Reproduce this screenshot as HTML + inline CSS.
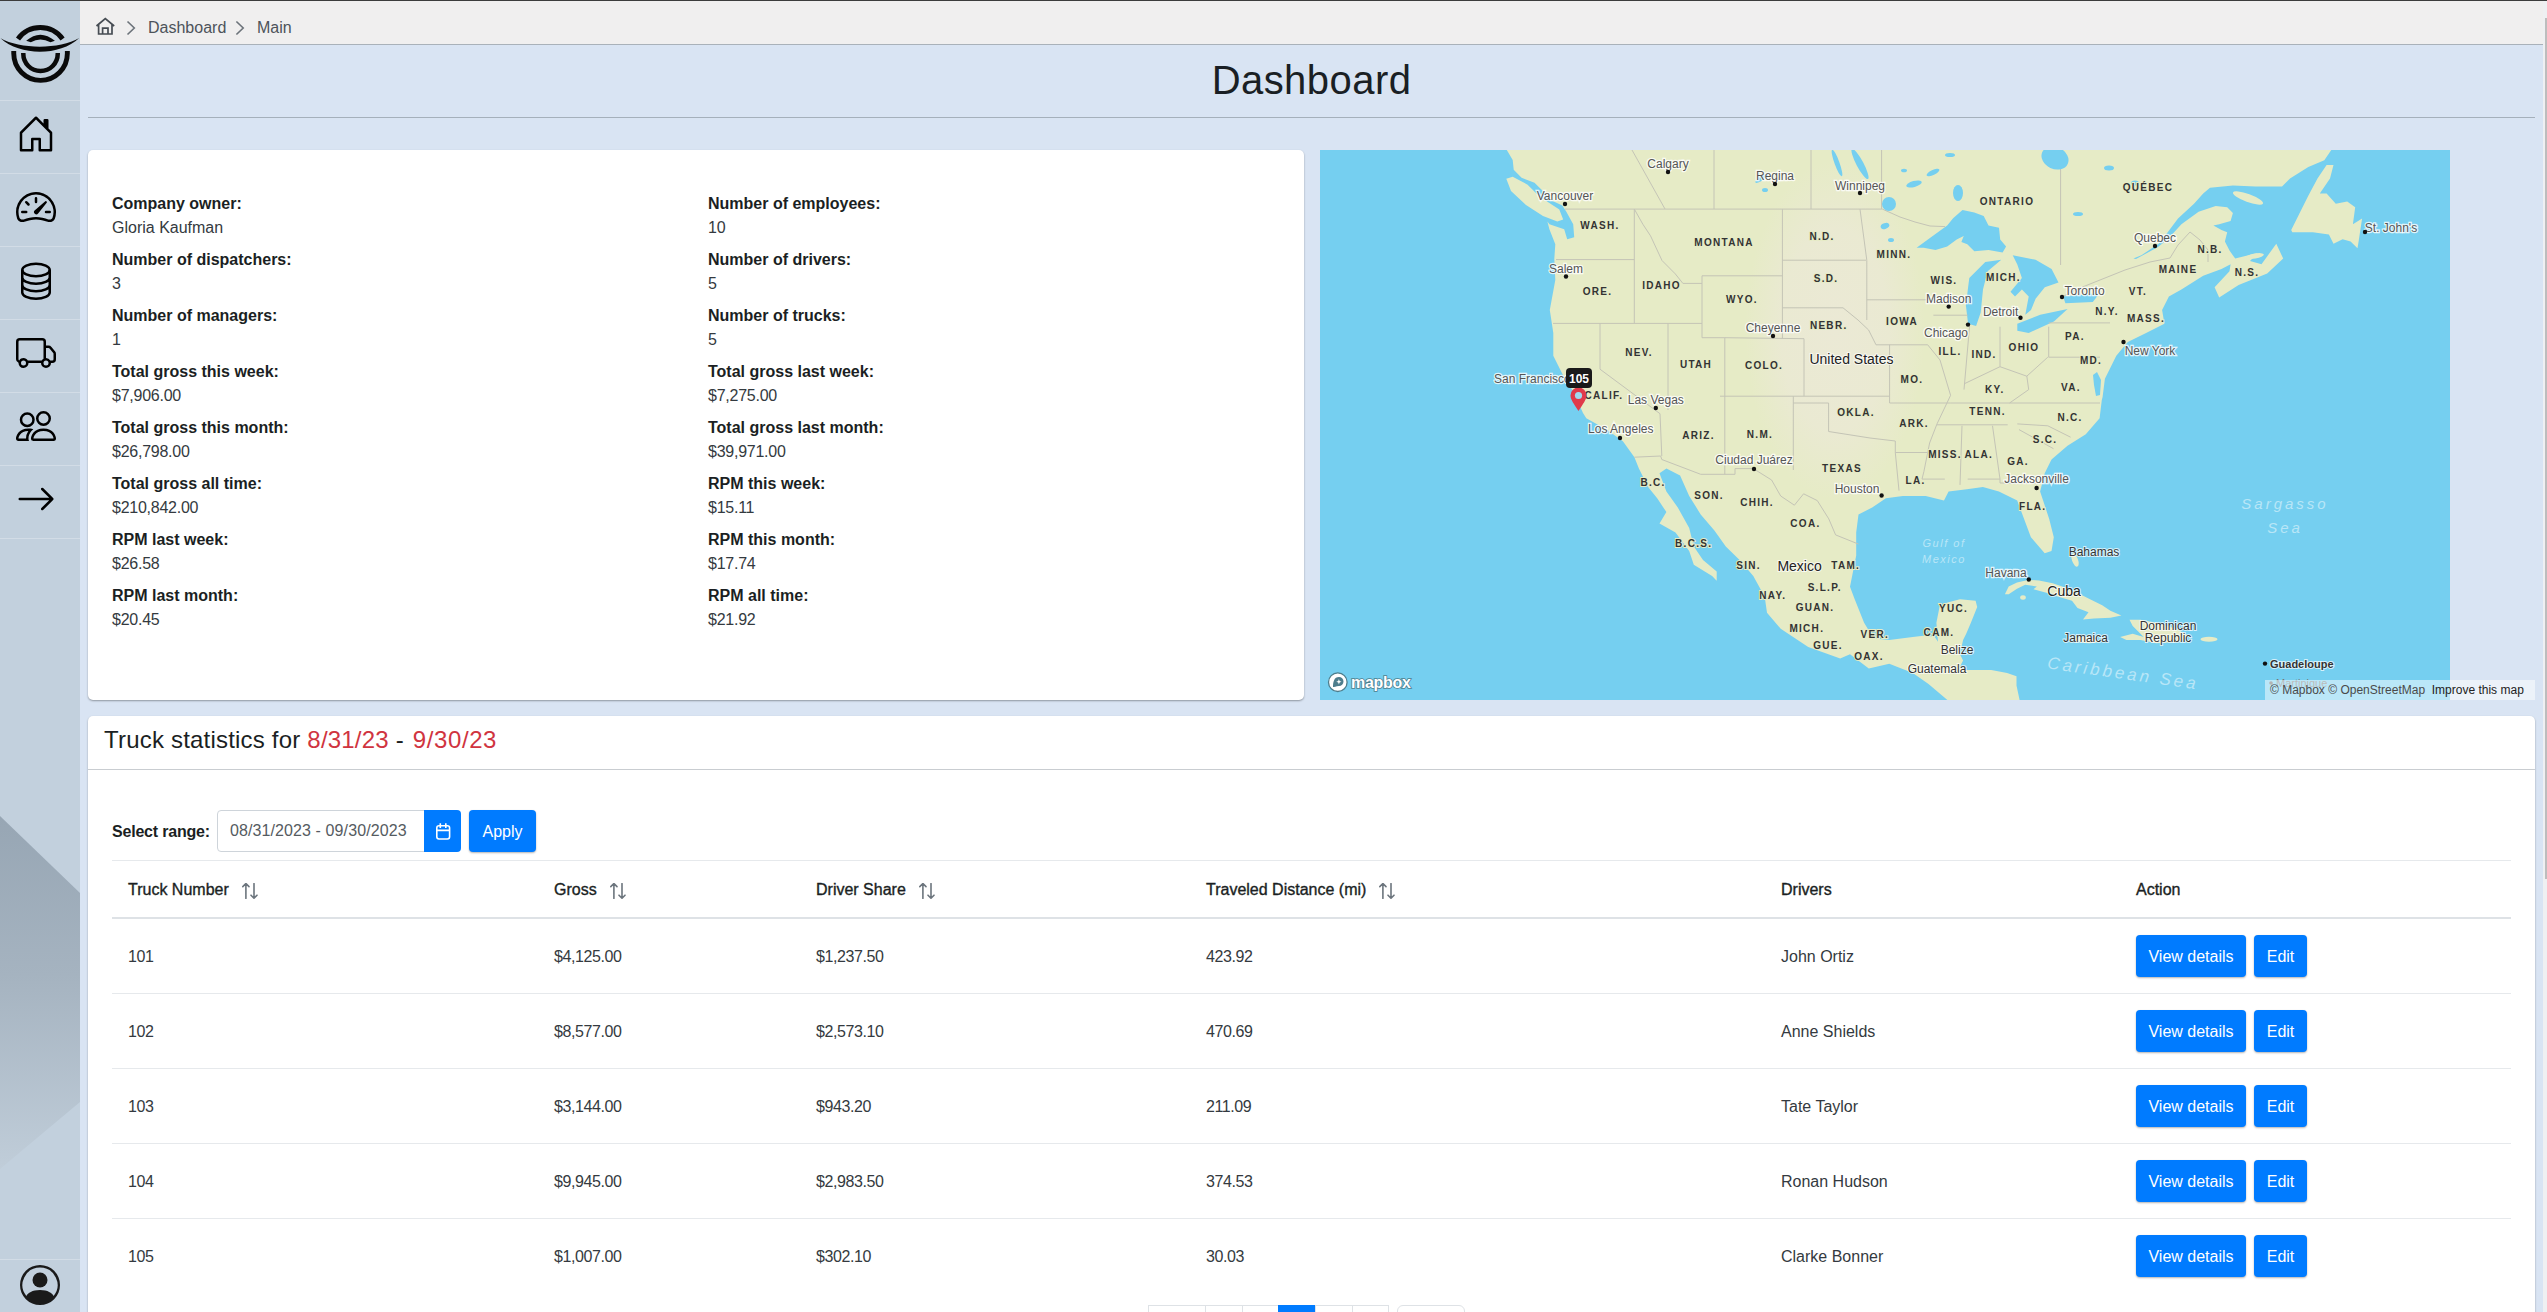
<!DOCTYPE html>
<html><head><meta charset="utf-8">
<style>
*{box-sizing:border-box;margin:0;padding:0}
html,body{width:2547px;height:1312px;overflow:hidden}
body{font-family:"Liberation Sans",sans-serif;background:#d9e4f3;color:#212529;position:relative;font-size:16px}
.abs{position:absolute}
#topline{left:0;top:0;width:2547px;height:1px;background:#3c3c3c}
#sidebar{left:0;top:1px;width:80px;height:1311px;background:#c2d0dd;overflow:hidden}
.sep{position:absolute;left:0;width:80px;height:1px;background:#d2dce6}
.ico{position:absolute}
#crumb{left:80px;top:1px;width:2463px;height:44px;background:#f0efef;border-bottom:1px solid #a9b1b9}
#scroll{left:2543px;top:1px;width:4px;height:1311px;background:#eff0f2}
#thumb{left:2545px;top:18px;width:2px;height:861px;background:#bdbdbd}
.crumbtxt{font-size:16px;color:#4d535a;position:absolute;top:17px;line-height:20px}
h1{position:absolute;left:80px;width:2463px;top:56px;text-align:center;font-size:40px;font-weight:normal;color:#1a1f24;line-height:48px;letter-spacing:0.45px}
#h1line{left:88px;top:117px;width:2447px;height:1px;background:#a5b0bb}
.card{position:absolute;background:#fff;border-radius:5px;box-shadow:0 1px 2px rgba(0,0,0,.35)}
#info{left:88px;top:150px;width:1216px;height:550px}
.icol{position:absolute;top:41.5px}
.lbl{font-weight:bold;font-size:16px;color:#1b1f23;line-height:24px;white-space:nowrap}
.val{font-size:16px;color:#343a40;line-height:24px;margin-bottom:8px;white-space:nowrap}
#map{left:1320px;top:150px;width:1130px;height:550px;background:#75cff0;overflow:hidden}
#tbl{left:88px;top:716px;width:2447px;height:620px}

.ttl{position:absolute;left:16px;top:8px;font-size:24px;line-height:32px;color:#1b1f23;white-space:nowrap;letter-spacing:0.2px}
.red{color:#d03440}
.hsep{position:absolute;left:0;top:53px;width:100%;height:1px;background:#c9cdd1}
.selr{position:absolute;left:24px;top:104px;font-weight:bold;line-height:24px;color:#1b1f23;letter-spacing:-0.2px}
.inp{position:absolute;left:129px;top:94px;width:208px;height:42px;border:1px solid #ced4da;border-radius:4px 0 0 4px;font-size:16px;color:#555b61;padding:10px 0 0 12px;line-height:20px;letter-spacing:0.1px;white-space:nowrap}
.calbtn{position:absolute;left:336px;top:94px;width:37px;height:42px;background:#007bff;border-radius:0 4px 4px 0;display:flex;align-items:center;justify-content:center}
.btn{position:absolute;height:42px;background:#007bff;color:#fff;border-radius:4px;box-shadow:0 1px 2px rgba(0,0,0,.3);text-align:center;line-height:43px;font-size:16px}
.apply{left:381px;top:94px;width:67px}
.vd{width:110px}.ed{width:53px}
.tline{position:absolute;left:24px;width:2399px;background:#e6e9ec}
.th{position:absolute;top:161.5px;line-height:24px;color:#1b1f23;white-space:nowrap;-webkit-text-stroke:0.35px #1b1f23}
.sort{position:absolute;left:calc(100% + 13px);top:5.5px}
.td{position:absolute;line-height:74px;color:#343a40;white-space:nowrap;margin-top:1px}
.num{letter-spacing:-0.4px}
.num2{letter-spacing:-0.25px}
.pg{position:absolute;top:589px;height:40px;border:1px solid #dee2e6;border-right:none;background:#fff}
.pg.act{background:#007bff;border-color:#007bff}
.pg2{position:absolute;top:589px;height:40px;border:1px solid #dee2e6;border-radius:6px;background:#fff}
#attr{left:2265px;top:680px;width:270px;height:20px;background:rgba(255,255,255,.5);font-size:12px;line-height:20px;padding-left:5px;white-space:nowrap}
</style></head><body>
<div id="topline" class="abs"></div>
<div id="sidebar" class="abs">
<svg width="80" height="100" style="position:absolute;left:0;top:-1px" viewBox="0 0 80 100">
<path d="M18,39 A27.4,27.4 0 0 1 62.6,39" stroke="#0a0a0a" stroke-width="5" fill="none"/>
<path d="M26.2,40.8 Q40.2,28.5 54.9,40.8 L50.5,42.2 Q40.2,36.6 30.8,42.2 Z" fill="#0a0a0a"/>
<path d="M0.6,38.3 C20,49.5 60,49.5 79.2,38 C60,56.3 20,56.3 0.6,38.3 Z" fill="#0a0a0a"/>
<path d="M13.75,51 L13.75,53.6 A26.8,26.8 0 0 0 67.35,53.6 L67.35,51" stroke="#0a0a0a" stroke-width="4.9" fill="none"/>
<path d="M23.3,53.1 L23.3,53.8 A17.2,17.2 0 0 0 57.75,53.8 L57.75,53.1" stroke="#0a0a0a" stroke-width="4.5" fill="none"/>
</svg>
<div class="sep" style="top:99px"></div>
<div class="sep" style="top:172px"></div>
<div class="sep" style="top:245px"></div>
<div class="sep" style="top:318px"></div>
<div class="sep" style="top:391px"></div>
<div class="sep" style="top:464px"></div>
<div class="sep" style="top:537px"></div>
<svg class="ico" style="left:16px;top:113px" width="40" height="40" viewBox="0 0 16 16" fill="#000"><path d="M8.354 1.146a.5.5 0 0 0-.708 0l-6 6A.5.5 0 0 0 1.5 7.5v7a.5.5 0 0 0 .5.5h4.5a.5.5 0 0 0 .5-.5v-4h2v4a.5.5 0 0 0 .5.5H14a.5.5 0 0 0 .5-.5v-7a.5.5 0 0 0-.146-.354L13 5.793V2.5a.5.5 0 0 0-.5-.5h-1a.5.5 0 0 0-.5.5v1.293L8.354 1.146zM2.5 14V7.707l5.5-5.5 5.5 5.5V14H10v-4a.5.5 0 0 0-.5-.5h-3a.5.5 0 0 0-.5.5v4H2.5z"/></svg>
<svg class="ico" style="left:16px;top:186px" width="40" height="40" viewBox="0 0 16 16" fill="#000"><path d="M8 4a.5.5 0 0 1 .5.5V6a.5.5 0 0 1-1 0V4.5A.5.5 0 0 1 8 4zM3.732 5.732a.5.5 0 0 1 .707 0l.915.914a.5.5 0 1 1-.708.708l-.914-.915a.5.5 0 0 1 0-.707zM2 10a.5.5 0 0 1 .5-.5h1.586a.5.5 0 0 1 0 1H2.5A.5.5 0 0 1 2 10zm9.5 0a.5.5 0 0 1 .5-.5h1.5a.5.5 0 0 1 0 1H12a.5.5 0 0 1-.5-.5zm.754-4.246a.389.389 0 0 0-.527-.02L7.547 9.31a.91.91 0 1 0 1.302 1.258l3.434-4.297a.389.389 0 0 0-.029-.518z"/><path fill-rule="evenodd" d="M0 10a8 8 0 1 1 15.547 2.661c-.442 1.253-1.845 1.602-2.932 1.25C11.309 13.488 9.475 13 8 13c-1.474 0-3.31.488-4.615.911-1.087.352-2.49.003-2.932-1.25A7.988 7.988 0 0 1 0 10zm8-7a7 7 0 0 0-6.603 9.329c.203.575.923.876 1.68.63C4.397 12.533 6.358 12 8 12s3.604.532 4.923.96c.757.245 1.477-.056 1.68-.631A7 7 0 0 0 8 3z"/></svg>
<svg class="ico" style="left:16px;top:259px" width="40" height="40" viewBox="0 0 40 40" fill="none" stroke="#000" stroke-width="2.5"><ellipse cx="20" cy="10" rx="13.75" ry="6.25"/><path d="M6.25,10 V32.5 A13.75,6.25 0 0 0 33.75,32.5 V10 M6.25,17.5 A13.75,6.25 0 0 0 33.75,17.5 M6.25,25 A13.75,6.25 0 0 0 33.75,25"/></svg>
<svg class="ico" style="left:16px;top:332px" width="40" height="40" viewBox="0 0 16 16" fill="#000"><path d="M0 3.5A1.5 1.5 0 0 1 1.5 2h9A1.5 1.5 0 0 1 12 3.5V5h1.02a1.5 1.5 0 0 1 1.17.563l1.481 1.85a1.5 1.5 0 0 1 .329.938V10.5a1.5 1.5 0 0 1-1.5 1.5H14a2 2 0 1 1-4 0H5a2 2 0 1 1-3.998-.085A1.5 1.5 0 0 1 0 10.5v-7zm1.294 7.456A1.999 1.999 0 0 1 4.732 11h5.536a2.010 2.010 0 0 1 .732-.732V3.5a.5.5 0 0 0-.5-.5h-9a.5.5 0 0 0-.5.5v7a.5.5 0 0 0 .294.456zM12 10a2 2 0 0 1 1.732 1h.768a.5.5 0 0 0 .5-.5V8.35a.5.5 0 0 0-.11-.312l-1.48-1.85A.5.5 0 0 0 13.02 6H12v4zm-9 1a1 1 0 1 0 0 2 1 1 0 0 0 0-2zm9 0a1 1 0 1 0 0 2 1 1 0 0 0 0-2z"/></svg>
<svg class="ico" style="left:16px;top:405px" width="40" height="40" viewBox="0 0 16 16" fill="#000"><path d="M15 14s1 0 1-1-1-4-5-4-5 3-5 4 1 1 1 1h8Zm-7.978-1A.261.261 0 0 1 7 12.996c.001-.264.167-1.030.760-1.720C8.312 10.629 9.282 10 11 10c1.717 0 2.687.630 3.240 1.276.593.690.758 1.457.760 1.720l-.008.002a.274.274 0 0 1-.014.002H7.022ZM11 7a2 2 0 1 0 0-4 2 2 0 0 0 0 4Zm3-2a3 3 0 1 1-6 0 3 3 0 0 1 6 0ZM6.936 9.280a5.880 5.880 0 0 0-1.230-.247A7.350 7.350 0 0 0 5 9c-4 0-5 3-5 4 0 .667.333 1 1 1h4.216A2.238 2.238 0 0 1 5 13c0-1.010.377-2.042 1.090-2.904.243-.294.526-.569.846-.816ZM4.920 10A5.493 5.493 0 0 0 4 13H1c0-.260.164-1.030.760-1.724.545-.636 1.492-1.256 3.160-1.275ZM1.500 5.500a3 3 0 1 1 6 0 3 3 0 0 1-6 0Zm3-2a2 2 0 1 0 0 4 2 2 0 0 0 0-4Z"/></svg>
<svg class="ico" style="left:16px;top:478px" width="40" height="40" viewBox="0 0 16 16" fill="#000"><path fill-rule="evenodd" d="M1 8a.5.5 0 0 1 .5-.5h11.793l-3.147-3.146a.5.5 0 0 1 .708-.708l4 4a.5.5 0 0 1 0 .708l-4 4a.5.5 0 0 1-.708-.708L13.293 8.500H1.500A.5.5 0 0 1 1 8z"/></svg>
<svg width="80" height="400" style="position:absolute;left:0;top:815px" viewBox="0 816 80 400">
<defs><linearGradient id="sg" x1="0" y1="0" x2="0" y2="1"><stop offset="0" stop-color="#97a6b4"/><stop offset="0.45" stop-color="#a5b3c0"/><stop offset="1" stop-color="#c0cdd9"/></linearGradient></defs>
<path d="M0,816 L80,893 L80,1102 L0,1169 Z" fill="url(#sg)"/>
</svg>
<div class="sep" style="top:1258px"></div>
<svg class="ico" style="left:20px;top:1264px" width="40" height="40" viewBox="0 0 16 16" fill="#1a1a1a"><path d="M11 6a3 3 0 1 1-6 0 3 3 0 0 1 6 0z"/><path fill-rule="evenodd" d="M0 8a8 8 0 1 1 16 0A8 8 0 0 1 0 8zm8-7a7 7 0 0 0-5.468 11.37C3.242 11.226 4.805 10 8 10s4.757 1.225 5.468 2.370A7 7 0 0 0 8 1z"/></svg>
</div>
<div id="crumb" class="abs">
<svg style="position:absolute;left:15px;top:16px" width="21" height="19" viewBox="95 17 21 19"><path d="M96.5,26 L105.3,18.6 L114.2,26 M98.6,24.3 V34 H112 V24.3 M102.6,34 V28.2 H108 V34" stroke="#464c53" stroke-width="1.7" fill="none"/></svg>
<svg style="position:absolute;left:46px;top:19px" width="10" height="16" viewBox="126 19 10 16"><path d="M127.5,20.5 L134.3,27 L127.5,33.5" stroke="#6c737a" stroke-width="1.6" fill="none"/></svg>
<div class="crumbtxt" style="left:68px">Dashboard</div>
<svg style="position:absolute;left:155px;top:19px" width="10" height="16" viewBox="235 19 10 16"><path d="M236.4,20.5 L243.2,27 L236.4,33.5" stroke="#6c737a" stroke-width="1.6" fill="none"/></svg>
<div class="crumbtxt" style="left:177px">Main</div>
</div>
<div id="scroll" class="abs"></div>
<div id="thumb" class="abs"></div>
<h1>Dashboard</h1>
<div id="h1line" class="abs"></div>
<div id="info" class="card">
<div class="icol" style="left:24px"><div class="lbl">Company owner:</div><div class="val">Gloria Kaufman</div><div class="lbl">Number of dispatchers:</div><div class="val num2">3</div><div class="lbl">Number of managers:</div><div class="val num2">1</div><div class="lbl">Total gross this week:</div><div class="val num2">$7,906.00</div><div class="lbl">Total gross this month:</div><div class="val num2">$26,798.00</div><div class="lbl">Total gross all time:</div><div class="val num2">$210,842.00</div><div class="lbl">RPM last week:</div><div class="val num2">$26.58</div><div class="lbl">RPM last month:</div><div class="val num2">$20.45</div></div><div class="icol" style="left:620px"><div class="lbl">Number of employees:</div><div class="val num2">10</div><div class="lbl">Number of drivers:</div><div class="val num2">5</div><div class="lbl">Number of trucks:</div><div class="val num2">5</div><div class="lbl">Total gross last week:</div><div class="val num2">$7,275.00</div><div class="lbl">Total gross last month:</div><div class="val num2">$39,971.00</div><div class="lbl">RPM this week:</div><div class="val num2">$15.11</div><div class="lbl">RPM this month:</div><div class="val num2">$17.74</div><div class="lbl">RPM all time:</div><div class="val num2">$21.92</div></div>
</div>
<div id="map" class="abs">
<svg width="1130" height="550" viewBox="1320 150 1130 550" style="position:absolute;left:0;top:0">
<rect x="1320" y="150" width="1130" height="550" fill="#75cff0"/>
<path d="M1506.8,150.0 L2331.3,150.0 L2324.3,160.3 L2308.3,167.1 L2290.0,178.6 L2282.0,186.6 L2255.7,186.6 L2232.9,185.4 L2210.0,187.7 L2203.2,193.4 L2194.0,203.7 L2178.0,218.6 L2167.7,232.3 L2158.6,243.7 L2141.4,255.2 L2133.4,258.6 L2136.0,259.0 L2158.0,247.0 L2167.7,239.2 L2181.4,224.3 L2198.6,211.7 L2215.7,206.0 L2227.2,207.2 L2232.9,212.9 L2230.6,220.9 L2219.2,224.3 L2213.4,225.5 L2221.5,230.0 L2227.2,232.3 L2224.9,241.4 L2229.5,250.6 L2235.2,258.6 L2244.3,256.3 L2258.0,252.9 L2250.0,260.9 L2261.5,264.3 L2276.3,243.7 L2283.2,258.6 L2267.2,273.5 L2238.6,284.9 L2219.2,297.5 L2214.6,287.2 L2229.5,271.2 L2230.6,264.3 L2221.5,268.9 L2203.2,275.7 L2181.4,289.5 L2168.9,296.4 L2162.1,310.1 L2164.4,323.8 L2146.1,333.0 L2127.8,342.1 L2116.3,355.8 L2109.5,369.6 L2104.9,378.7 L2102.6,397.0 L2101.8,400.0 L2099.6,418.3 L2085.8,434.3 L2067.5,445.7 L2051.5,459.5 L2044.7,473.2 L2040.1,491.5 L2049.2,518.9 L2053.8,537.2 L2051.5,550.9 L2044.7,553.2 L2030.9,537.2 L2024.1,518.9 L2017.2,500.6 L1998.9,491.5 L1982.9,486.9 L1966.9,489.2 L1948.6,491.5 L1944.0,500.6 L1925.7,496.1 L1902.9,496.1 L1885.9,498.3 L1872.2,507.5 L1858.5,514.4 L1856.2,532.6 L1856.2,555.5 L1850.0,586.7 L1854.7,599.3 L1864.1,622.8 L1873.6,638.5 L1889.3,640.1 L1912.8,637.0 L1925.4,635.4 L1934.8,637.0 L1938.0,641.7 L1936.4,622.8 L1939.5,607.1 L1947.4,602.4 L1960.0,599.3 L1975.6,600.8 L1977.2,607.1 L1970.9,622.8 L1966.2,633.8 L1963.1,640.1 L1959.9,654.2 L1963.1,660.5 L1959.9,666.8 L1966.2,670.0 L1991.3,670.0 L2007.1,673.1 L2016.5,676.2 L2016.5,685.6 L2019.6,700.0 L1947.4,700.0 L1928.5,684.1 L1912.8,673.1 L1889.3,663.7 L1868.8,668.4 L1850.0,654.2 L1840.2,658.4 L1808.2,647.0 L1780.7,628.7 L1767.0,612.7 L1764.7,596.7 L1753.3,576.1 L1739.6,560.1 L1725.8,546.4 L1714.4,530.4 L1700.7,514.4 L1689.2,496.1 L1680.1,475.5 L1666.4,468.6 L1659.5,473.2 L1666.4,491.5 L1677.8,507.5 L1689.2,528.1 L1693.8,546.4 L1703.0,560.1 L1716.7,571.5 L1716.7,580.7 L1712.1,576.1 L1693.8,564.7 L1689.2,550.9 L1675.5,532.6 L1659.5,523.5 L1666.4,512.1 L1657.2,498.3 L1648.1,486.9 L1638.9,468.6 L1634.4,457.2 L1622.9,441.2 L1606.9,429.7 L1586.3,418.3 L1583.0,413.0 L1573.9,392.4 L1562.4,374.1 L1553.3,355.8 L1553.3,333.0 L1549.8,310.1 L1555.3,280.0 L1554.3,259.0 L1555.3,244.2 L1549.4,229.3 L1547.4,221.4 L1549.4,224.3 L1564.2,229.3 L1567.2,239.2 L1574.2,237.2 L1573.2,224.3 L1566.2,211.4 L1562.3,205.5 L1549.4,199.6 L1544.4,192.6 L1534.5,182.7 L1521.6,177.7 L1513.7,169.8 L1512.7,159.9 Z" fill="#e6ebc6"/>
<path d="M2291.2,230.0 L2299.2,214.0 L2308.3,195.7 L2317.5,178.6 L2326.6,164.9 L2333.5,164.9 L2330.0,178.6 L2319.8,193.4 L2326.6,193.4 L2335.8,203.7 L2347.2,201.4 L2355.2,207.2 L2352.9,224.3 L2362.1,218.6 L2358.6,241.4 L2357.5,248.3 L2350.6,241.4 L2342.6,239.2 L2333.5,243.7 L2328.9,234.6 L2312.9,232.3 L2292.3,232.3 Z" fill="#e6ebc6"/>
<path d="M2004.9,594.2 L2008.7,586.5 L2017.0,582.6 L2028.0,579.9 L2039.0,580.4 L2052.7,583.2 L2066.5,588.1 L2080.2,594.2 L2088.5,598.6 L2102.2,605.2 L2110.4,610.7 L2121.4,615.6 L2110.4,617.8 L2094.0,618.4 L2083.0,619.5 L2088.5,612.3 L2077.5,607.9 L2072.0,600.8 L2061.0,597.5 L2047.2,593.1 L2033.5,589.2 L2036.8,586.5 L2025.2,584.8 L2017.0,588.7 L2008.7,594.2 Z" fill="#e6ebc6"/>
<path d="M2120.1,637.0 L2132.7,633.8 L2143.7,637.0 L2132.7,626.0 L2129.5,619.7 L2140.5,619.7 L2156.2,622.8 L2176.7,629.1 L2187.7,635.4 L2179.8,641.7 L2156.2,643.2 L2140.5,640.1 L2126.4,640.1 Z" fill="#e6ebc6"/>
<path d="M1506.3,178.7 L1512.7,176.8 L1527.6,184.7 L1539.5,196.6 L1559.3,209.5 L1563.2,219.4 L1557.3,221.4 L1543.0,216.0 L1526.0,205.0 L1511.0,191.0 Z" fill="#e6ebc6"/>
<defs><radialGradient id="pl"><stop offset="0" stop-color="#ebe9d5" stop-opacity="1"/><stop offset="0.6" stop-color="#ebe9d5" stop-opacity="0.8"/><stop offset="1" stop-color="#ebe9d5" stop-opacity="0"/></radialGradient></defs>
<ellipse cx="1835" cy="330" rx="90" ry="170" fill="url(#pl)"/>
<path d="M1916.6,247.8 L1929.6,238.3 L1947.2,225.4 L1953.1,218.3 L1962.5,210.1 L1974.3,212.4 L1983.7,216.0 L1988.5,225.4 L1999.0,227.7 L2000.2,239.5 L2006.1,246.6 L2002.6,252.5 L1988.5,250.1 L1974.3,251.3 L1967.3,244.2 L1961.4,241.9 L1963.7,236.0 L1956.7,239.5 L1947.2,246.6 L1935.5,250.1 L1923.7,247.8 Z" fill="#75cff0"/>
<path d="M1969.3,278.1 L1985.3,262.1 L2001.3,259.8 L1987.6,271.2 L1983.0,289.5 L1980.7,312.4 L1976.1,326.1 L1968.1,323.8 L1965.9,305.5 L1968.1,287.2 Z" fill="#75cff0"/>
<path d="M2012.7,255.2 L2035.6,259.8 L2051.6,268.9 L2058.5,282.6 L2044.8,287.2 L2035.6,298.7 L2031.0,310.1 L2025.3,314.7 L2028.7,296.4 L2021.9,289.5 L2015.0,296.4 L2010.5,291.8 L2021.9,278.1 L2017.3,264.4 Z" fill="#75cff0"/>
<path d="M2017.3,323.8 L2040.2,314.7 L2067.6,309.0 L2053.9,321.5 L2028.7,333.0 L2017.3,330.7 Z" fill="#75cff0"/>
<path d="M2063.1,296.4 L2099.7,292.9 L2092.8,302.1 L2065.4,303.2 Z" fill="#75cff0"/>
<path d="M2097.0,372.0 L2101.0,380.0 L2100.0,395.0 L2096.0,396.0 L2094.0,385.0 L2093.0,375.0 Z" fill="#75cff0"/>
<g fill="none" stroke="#c4c4b6" stroke-width="1"><path d="M1565,209.1 L1882.4,209.1 L1900,217 L1915,222 L1930,226 L1945,226.6"/><path d="M2062,297 L2075,290 L2100,280 L2125,270 L2150,262 L2170,258 L2178,245 L2190,232 L2200,240 L2208,250 L2208,262"/><path d="M1556,259.6 L1634.3,259.6 M1634.3,209.1 L1634.3,323.4 M1553,323.4 L1702,323.4 M1668,323.4 L1668,410 M1600,323.4 L1600,369.2 L1660,413.7 L1661.8,456"/><path d="M1634.3,209.1 L1642.9,224.3 L1650.5,235.8 L1662,260.5 L1675.3,273.9 L1682.9,283.4 L1702,283.4 M1702,275.8 L1782.4,275.8 M1782.4,209.1 L1782.4,338.7 M1702,275.8 L1702,337.7 L1724.8,337.7 L1804,338.7 L1804,396.2"/><path d="M1782.4,260.2 L1866,260.2 M1782.4,307.8 L1843,307.8 L1858,320 L1868.6,330 L1876,344.8 M1860,209.1 L1866.8,260.2 L1866.8,320 M1866.8,299.8 L1927,299.8"/><path d="M1724.8,337.7 L1724.8,474.3 M1720,396.2 L1889.6,396.2 M1889.6,344.8 L1889.6,403 L1950.6,403 M1876,344.8 L1927.7,344.8 L1940,360 L1950.6,395.3"/><path d="M1793.3,396.2 L1793.3,470 M1793.3,403 L1828.6,403 L1828.6,431.5 L1870,438 L1895.3,441 L1895.3,452.5 L1899,490.6 M1895.3,452.5 L1931.5,452.5"/><path d="M1950.6,395.3 L1937,423.9 L1929.6,443 L1923.9,471.5 L1922,479.1 L1944.8,479.1 M1962,425.8 L1960,484.9 M1992.5,425.8 L2000,479.1 M1967.7,479.1 L2000,479.1 L2000,483 L2036,483"/><path d="M1950.6,403 L2100,403 M1937,424.8 L2007.7,424.8 M1933.4,315.2 L1967.7,315.2 M1969.6,326 L1964,389.6 M2000,326.7 L2000,366.7 M1964,383.9 L2000,366.7 L2026.8,376.2 L2047.8,357.2"/><path d="M2048.7,326.7 L2048.7,357.2 L2100,357.2 M2048.7,322.9 L2110,322.9 M2026.8,376 L2028.7,389.6 L2009.6,403 M2017.3,423.9 L2047.8,425.8 L2070.6,437.2 M2019,429.6 L2053.5,448.7"/><path d="M1634.4,457.2 L1660.7,456 L1661.8,459.5 L1700.7,474.3 L1735,474.3 L1735,468.6 L1753.3,468.6 L1771.6,480 L1780.7,496 L1794.4,505.2 L1803.6,493.8 L1817.3,500.6 L1828.8,518.9 L1835.6,534.9 L1858.5,544.1"/><path d="M1714,150 L1714,209 M1811,150 L1811,209 M1632,150 L1665,209 M1881.6,150 L1881.6,209 M2060.6,150 L2060.6,265"/></g>
<ellipse cx="1860" cy="164" rx="3.5" ry="17" transform="rotate(-28 1860 164)" fill="#75cff0"/>
<ellipse cx="1837" cy="163" rx="2.5" ry="14" transform="rotate(-20 1837 163)" fill="#75cff0"/>
<ellipse cx="1889" cy="204" rx="7" ry="7" transform="rotate(0 1889 204)" fill="#75cff0"/>
<ellipse cx="1958" cy="193" rx="5" ry="8" transform="rotate(0 1958 193)" fill="#75cff0"/>
<ellipse cx="2055" cy="158" rx="14" ry="11" transform="rotate(25 2055 158)" fill="#75cff0"/>
<ellipse cx="2109" cy="168" rx="5" ry="2.5" transform="rotate(0 2109 168)" fill="#75cff0"/>
<ellipse cx="2135" cy="183" rx="4" ry="2.5" transform="rotate(0 2135 183)" fill="#75cff0"/>
<ellipse cx="1762" cy="178" rx="8" ry="2" transform="rotate(-35 1762 178)" fill="#75cff0"/>
<ellipse cx="1765" cy="190" rx="3" ry="2" transform="rotate(0 1765 190)" fill="#75cff0"/>
<ellipse cx="1933" cy="172.5" rx="7" ry="2.5" transform="rotate(-25 1933 172.5)" fill="#75cff0"/>
<ellipse cx="1914" cy="184" rx="8" ry="3" transform="rotate(-15 1914 184)" fill="#75cff0"/>
<ellipse cx="1904" cy="170.5" rx="3" ry="1.8" transform="rotate(0 1904 170.5)" fill="#75cff0"/>
<ellipse cx="1885" cy="226" rx="4.5" ry="2.8" transform="rotate(-20 1885 226)" fill="#75cff0"/>
<ellipse cx="1891" cy="240" rx="3" ry="2" transform="rotate(0 1891 240)" fill="#75cff0"/>
<ellipse cx="1950" cy="155" rx="5" ry="2" transform="rotate(0 1950 155)" fill="#75cff0"/>
<ellipse cx="2078" cy="214" rx="5" ry="2" transform="rotate(0 2078 214)" fill="#75cff0"/>
<ellipse cx="2209" cy="639.3" rx="8.5" ry="2.5" transform="rotate(0 2209 639.3)" fill="#e6ebc6"/>
<ellipse cx="2086" cy="640" rx="12" ry="3" transform="rotate(5 2086 640)" fill="#e6ebc6"/>
<ellipse cx="2023" cy="597.5" rx="2.8" ry="2.2" transform="rotate(0 2023 597.5)" fill="#e6ebc6"/>
<ellipse cx="2075" cy="560" rx="3" ry="7" transform="rotate(-20 2075 560)" fill="#e6ebc6"/>
<ellipse cx="2248" cy="198" rx="16" ry="4" transform="rotate(20 2248 198)" fill="#e6ebc6"/>
<ellipse cx="2255" cy="256" rx="9" ry="2.5" transform="rotate(-10 2255 256)" fill="#e6ebc6"/>
<g font-family="Liberation Sans" font-weight="bold" font-size="10" fill="#333" text-anchor="middle" letter-spacing="1.3" stroke="#e6ebc6" stroke-width="2" paint-order="stroke">
<text x="1600" y="229.0">WASH.</text>
<text x="1724" y="245.5">MONTANA</text>
<text x="1822" y="239.5">N.D.</text>
<text x="1894" y="257.5">MINN.</text>
<text x="2210" y="252.5">N.B.</text>
<text x="2178" y="272.5">MAINE</text>
<text x="2247" y="276.1">N.S.</text>
<text x="1597.5" y="295.0">ORE.</text>
<text x="1661.6" y="288.5">IDAHO</text>
<text x="1742" y="302.5">WYO.</text>
<text x="1826" y="281.5">S.D.</text>
<text x="1944" y="283.5">WIS.</text>
<text x="2003.5" y="280.5">MICH.</text>
<text x="2138" y="294.5">VT.</text>
<text x="2107" y="314.5">N.Y.</text>
<text x="2146" y="321.5">MASS.</text>
<text x="1828.7" y="328.5">NEBR.</text>
<text x="1902" y="324.5">IOWA</text>
<text x="2075" y="340.2">PA.</text>
<text x="1639" y="355.5">NEV.</text>
<text x="1696" y="367.5">UTAH</text>
<text x="1764" y="368.5">COLO.</text>
<text x="1950" y="354.5">ILL.</text>
<text x="1984" y="357.5">IND.</text>
<text x="2024" y="350.5">OHIO</text>
<text x="2091" y="364.0">MD.</text>
<text x="1604" y="399.0">CALIF.</text>
<text x="1912" y="382.9">MO.</text>
<text x="1994.8" y="392.5">KY.</text>
<text x="2071" y="390.5">VA.</text>
<text x="1856" y="415.5">OKLA.</text>
<text x="1914" y="426.5">ARK.</text>
<text x="1987.5" y="414.5">TENN.</text>
<text x="2070" y="420.5">N.C.</text>
<text x="1698.5" y="438.5">ARIZ.</text>
<text x="1760" y="437.5">N.M.</text>
<text x="2045" y="443.2">S.C.</text>
<text x="1842" y="471.5">TEXAS</text>
<text x="1945" y="457.5">MISS.</text>
<text x="1978.8" y="457.5">ALA.</text>
<text x="2018" y="464.5">GA.</text>
<text x="1653" y="485.5">B.C.</text>
<text x="1915.6" y="483.5">LA.</text>
<text x="1709" y="499.0">SON.</text>
<text x="1757" y="505.5">CHIH.</text>
<text x="2032.7" y="509.5">FLA.</text>
<text x="1805.4" y="526.5">COA.</text>
<text x="1693.7" y="547.1">B.C.S.</text>
<text x="1748.6" y="568.5">SIN.</text>
<text x="1845.7" y="568.5">TAM.</text>
<text x="1772.8" y="598.5">NAY.</text>
<text x="1824.8" y="590.8">S.L.P.</text>
<text x="1815" y="610.5">GUAN.</text>
<text x="1953.5" y="612.2">YUC.</text>
<text x="1806.8" y="631.5">MICH.</text>
<text x="1874.8" y="637.5">VER.</text>
<text x="1939" y="635.5">CAM.</text>
<text x="1828" y="648.5">GUE.</text>
<text x="1869" y="659.5">OAX.</text>
<text x="2007" y="204.5">ONTARIO</text>
<text x="2148" y="190.5">QUÉBEC</text>
</g>
<g font-family="Liberation Sans" font-size="12" fill="#555" text-anchor="middle" stroke="#fff" stroke-width="2.5" stroke-opacity="0.8" paint-order="stroke">
<text x="1668" y="167.5">Calgary</text>
<text x="1775" y="179.5">Regina</text>
<text x="1860" y="189.5">Winnipeg</text>
<text x="2391" y="231.5">St. John's</text>
<text x="1565" y="199.5">Vancouver</text>
<text x="2155" y="241.5">Quebec</text>
<text x="1566" y="272.5">Salem</text>
<text x="1948.7" y="302.5">Madison</text>
<text x="2084.6" y="295.1">Toronto</text>
<text x="2000.6" y="315.5">Detroit</text>
<text x="1773" y="332.0">Cheyenne</text>
<text x="1946" y="336.5">Chicago</text>
<text x="2150" y="354.5">New York</text>
<text x="1532.4" y="382.5">San Francisco</text>
<text x="1655.8" y="403.5">Las Vegas</text>
<text x="1620.8" y="433.0">Los Angeles</text>
<text x="1754" y="464.1">Ciudad Juárez</text>
<text x="2036.6" y="483.0">Jacksonville</text>
<text x="1857" y="493.2">Houston</text>
<text x="2006" y="576.5">Havana</text>
</g>
<g fill="#111">
<circle cx="1668" cy="172" r="2.2"/>
<circle cx="1775" cy="184" r="2.2"/>
<circle cx="1860" cy="193" r="2.2"/>
<circle cx="2365" cy="232" r="2.2"/>
<circle cx="1565" cy="204" r="2.2"/>
<circle cx="2155" cy="246" r="2.2"/>
<circle cx="1566" cy="276.5" r="2.2"/>
<circle cx="1948.7" cy="306.6" r="2.2"/>
<circle cx="2062" cy="297" r="2.2"/>
<circle cx="2020.5" cy="317.8" r="2.2"/>
<circle cx="1773" cy="336" r="2.2"/>
<circle cx="1968" cy="324.6" r="2.2"/>
<circle cx="2123.5" cy="342" r="2.2"/>
<circle cx="1655.8" cy="408" r="2.2"/>
<circle cx="1620" cy="438" r="2.2"/>
<circle cx="1754" cy="469" r="2.2"/>
<circle cx="2036.6" cy="488" r="2.2"/>
<circle cx="1881.6" cy="495.5" r="2.2"/>
<circle cx="2028.8" cy="579.5" r="2.2"/>
<circle cx="2265" cy="663.6" r="2.2"/><circle cx="2271" cy="683" r="1.8" fill="#666"/></g>
<text x="2270" y="668" font-family="Liberation Sans" font-weight="bold" font-size="11" fill="#333" stroke="#fff" stroke-width="2" stroke-opacity="0.7" paint-order="stroke">Guadeloupe</text><text x="2276" y="687" font-family="Liberation Sans" font-size="11" fill="#777">Martinique</text>
<g font-family="Liberation Sans" font-size="12" fill="#333" text-anchor="middle" stroke="#fff" stroke-width="2" stroke-opacity="0.7" paint-order="stroke">
<text x="2094" y="555.5">Bahamas</text>
<text x="2085.6" y="642.3">Jamaica</text>
<text x="1957" y="653.5">Belize</text>
<text x="1937" y="672.5">Guatemala</text>
<text x="2168" y="630.2">Dominican</text>
<text x="2168" y="642.3">Republic</text>
</g>
<g font-family="Liberation Sans" font-size="14" fill="#222" text-anchor="middle" stroke="#fff" stroke-width="2" stroke-opacity="0.7" paint-order="stroke">
<text x="1851.5" y="363.5">United States</text>
<text x="1799.6" y="571">Mexico</text>
<text x="2064" y="595.7">Cuba</text>
</g>
<g font-family="Liberation Sans" font-style="italic" font-size="15" fill="#b8e6f7" text-anchor="middle" letter-spacing="3">
<text x="2285" y="509">Sargasso</text><text x="2285" y="533">Sea</text>
<text x="2123" y="679" transform="rotate(8 2123 674)" font-size="17">Caribbean Sea</text>
<text x="1944" y="547" font-size="11" letter-spacing="1.5">Gulf of</text><text x="1944" y="563" font-size="11" letter-spacing="1.5">Mexico</text>
</g>
<path d="M1578.5,411 C1574,404 1570.5,399.5 1570.5,395.5 A8,8 0 0 1 1586.5,395.5 C1586.5,399.5 1583,404 1578.5,411 Z" fill="#e03a4b"/>
<circle cx="1578.5" cy="395.5" r="3.6" fill="#9fd9f0"/>
<rect x="1566" y="368" width="26" height="20" rx="4" fill="#1a1a1a"/>
<text x="1579" y="383" font-family="Liberation Sans" font-weight="bold" font-size="12" fill="#fff" text-anchor="middle">105</text>
<g><circle cx="1337.8" cy="682.2" r="9.3" fill="#fff" stroke="#4d7d8c" stroke-width="1.3"/><path d="M1333,687 C1333,682 1334,677 1339,677 A4.5,4.5 0 0 1 1339,686 C1336,686.5 1334,687 1333,687 Z" fill="#4d7d8c"/><path d="M1338.9,679 L1339.6,681 L1341.5,681.7 L1339.6,682.4 L1338.9,684.4 L1338.2,682.4 L1336.3,681.7 L1338.2,681 Z" fill="#fff"/>
<text x="1351" y="688" font-family="Liberation Sans" font-weight="bold" font-size="16" fill="#fff" stroke="#4d7d8c" stroke-width="1.6" paint-order="stroke" letter-spacing="-0.3">mapbox</text></g>
</svg>
</div>
<div id="attr" class="abs"><span style="color:#4a4a4a">© Mapbox © OpenStreetMap</span>&nbsp; <span style="color:#222">Improve this map</span></div>
<div id="tbl" class="card">
<div class="ttl">Truck statistics for <span class="red">8/31/23</span> - <span class="red" style="margin-left:2px;letter-spacing:0.6px">9/30/23</span></div><div class="hsep"></div><div class="selr">Select range:</div><div class="inp">08/31/2023 - 09/30/2023</div><div class="calbtn"></div><svg style="position:absolute;left:346px;top:105px" width="18" height="20" viewBox="0 0 18 20"><rect x="2.8" y="4.8" width="12.8" height="13.2" rx="2.2" stroke="#fff" stroke-width="1.6" fill="none"/><path d="M2.8,9.4H15.6 M6.3,2.2V7 M11.8,2.2V7" stroke="#fff" stroke-width="1.6" fill="none"/></svg><div class="btn apply">Apply</div><div class="tline" style="top:144px;height:1px"></div><div class="th" style="left:40px">Truck Number<svg class="sort" width="16" height="16" viewBox="0 0 16 16"><path d="M3.9,15.4V0.8 M0.8,3.6L3.9,0.5L7,3.6 M12,0.6V15 M9,12.2L12,15.2L15,12.2" stroke="#6c757d" stroke-width="1.6" fill="none" stroke-linecap="round"/></svg></div><div class="th" style="left:466px">Gross<svg class="sort" width="16" height="16" viewBox="0 0 16 16"><path d="M3.9,15.4V0.8 M0.8,3.6L3.9,0.5L7,3.6 M12,0.6V15 M9,12.2L12,15.2L15,12.2" stroke="#6c757d" stroke-width="1.6" fill="none" stroke-linecap="round"/></svg></div><div class="th" style="left:728px">Driver Share<svg class="sort" width="16" height="16" viewBox="0 0 16 16"><path d="M3.9,15.4V0.8 M0.8,3.6L3.9,0.5L7,3.6 M12,0.6V15 M9,12.2L12,15.2L15,12.2" stroke="#6c757d" stroke-width="1.6" fill="none" stroke-linecap="round"/></svg></div><div class="th" style="left:1118px">Traveled Distance (mi)<svg class="sort" width="16" height="16" viewBox="0 0 16 16"><path d="M3.9,15.4V0.8 M0.8,3.6L3.9,0.5L7,3.6 M12,0.6V15 M9,12.2L12,15.2L15,12.2" stroke="#6c757d" stroke-width="1.6" fill="none" stroke-linecap="round"/></svg></div><div class="th" style="left:1693px">Drivers</div><div class="th" style="left:2048px">Action</div><div class="tline" style="top:201px;height:2px;background:#dee2e6"></div><div class="td num" style="left:40px;top:203px">101</div><div class="td num" style="left:466px;top:203px">$4,125.00</div><div class="td num" style="left:728px;top:203px">$1,237.50</div><div class="td num" style="left:1118px;top:203px">423.92</div><div class="td" style="left:1693px;top:203px">John Ortiz</div><div class="btn vd" style="left:2048px;top:219px">View details</div><div class="btn ed" style="left:2166px;top:219px">Edit</div><div class="tline" style="top:277px;height:1px"></div><div class="td num" style="left:40px;top:278px">102</div><div class="td num" style="left:466px;top:278px">$8,577.00</div><div class="td num" style="left:728px;top:278px">$2,573.10</div><div class="td num" style="left:1118px;top:278px">470.69</div><div class="td" style="left:1693px;top:278px">Anne Shields</div><div class="btn vd" style="left:2048px;top:294px">View details</div><div class="btn ed" style="left:2166px;top:294px">Edit</div><div class="tline" style="top:352px;height:1px"></div><div class="td num" style="left:40px;top:353px">103</div><div class="td num" style="left:466px;top:353px">$3,144.00</div><div class="td num" style="left:728px;top:353px">$943.20</div><div class="td num" style="left:1118px;top:353px">211.09</div><div class="td" style="left:1693px;top:353px">Tate Taylor</div><div class="btn vd" style="left:2048px;top:369px">View details</div><div class="btn ed" style="left:2166px;top:369px">Edit</div><div class="tline" style="top:427px;height:1px"></div><div class="td num" style="left:40px;top:428px">104</div><div class="td num" style="left:466px;top:428px">$9,945.00</div><div class="td num" style="left:728px;top:428px">$2,983.50</div><div class="td num" style="left:1118px;top:428px">374.53</div><div class="td" style="left:1693px;top:428px">Ronan Hudson</div><div class="btn vd" style="left:2048px;top:444px">View details</div><div class="btn ed" style="left:2166px;top:444px">Edit</div><div class="tline" style="top:502px;height:1px"></div><div class="td num" style="left:40px;top:503px">105</div><div class="td num" style="left:466px;top:503px">$1,007.00</div><div class="td num" style="left:728px;top:503px">$302.10</div><div class="td num" style="left:1118px;top:503px">30.03</div><div class="td" style="left:1693px;top:503px">Clarke Bonner</div><div class="btn vd" style="left:2048px;top:519px">View details</div><div class="btn ed" style="left:2166px;top:519px">Edit</div><div class="pg" style="left:1060px;width:57px"></div><div class="pg" style="left:1117px;width:37px"></div><div class="pg" style="left:1154px;width:36px"></div><div class="pg act" style="left:1190px;width:37px"></div><div class="pg" style="left:1227px;width:37px"></div><div class="pg" style="left:1264px;width:37px;border-right:1px solid #dee2e6"></div><div class="pg2" style="left:1309px;width:68px"></div>
</div>
</body></html>
